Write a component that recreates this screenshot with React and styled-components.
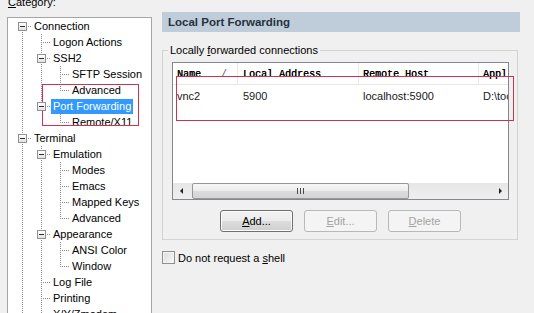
import React from 'react';
import styled, { createGlobalStyle, css } from 'styled-components';

const Global = createGlobalStyle`
  html, body { margin: 0; padding: 0; background: #f0f0f0; overflow: hidden; }
  body { font-family: "Liberation Sans", Arial, sans-serif; font-size: 11px; color: #000; }
`;

const Page = styled.div`
  position: relative;
  width: 534px;
  height: 313px;
  overflow: hidden;
  display: flex;
  align-items: flex-start;
`;

/* ---------- left: category tree ---------- */
const LeftCol = styled.div`
  flex: 0 0 145px;
  margin: -4px 0 0 7px;
`;

const CategoryLabel = styled.div`
  line-height: 13px;
  margin: 0 0 8px 1px;
`;

const TreeBox = styled.div`
  box-sizing: border-box;
  height: 330px;
  border: 1px solid #a5a5a5;
  background: #fff;
  padding-left: 5px;
  overflow: hidden;
`;

const TreeRow = styled.div`
  display: flex;
  align-items: center;
  height: 16px;
  white-space: nowrap;
`;

const Guide = styled.span`
  position: relative;
  flex: 0 0 19px;
  height: 16px;
  &::before {
    content: '';
    position: absolute;
    left: 9px;
    width: 1px;
    top: ${p => (p.$vert === 'bottom' ? '8px' : '0')};
    bottom: ${p => (p.$vert === 'top' ? '7px' : '0')};
    background: repeating-linear-gradient(to bottom, #8e8e8e 0 1px, transparent 1px 2px);
    display: ${p => (p.$vert === 'none' ? 'none' : 'block')};
  }
  &::after {
    content: '';
    position: absolute;
    left: 10px;
    right: 0;
    top: 8px;
    height: 1px;
    background: repeating-linear-gradient(to right, transparent 0 1px, #8e8e8e 1px 2px);
    display: ${p => (p.$branch ? 'block' : 'none')};
  }
`;

const Expander = styled.span`
  position: absolute;
  left: 5px;
  top: 4px;
  width: 9px;
  height: 9px;
  box-sizing: border-box;
  border: 1px solid #919191;
  background: linear-gradient(#ffffff, #e2e2e2);
  z-index: 1;
  &::after {
    content: '';
    position: absolute;
    left: 1px;
    top: 3px;
    width: 5px;
    height: 1px;
    background: #2f2f2f;
  }
`;

const NodeLabel = styled.span`
  padding: 0 2px;
  line-height: 15px;
  height: 15px;
  ${p => p.$selected && css`
    background: #3399ff;
    color: #fff;
  `}
`;

/* ---------- right: port forwarding panel ---------- */
const RightCol = styled.div`
  flex: 0 0 358px;
  margin: 12px 0 0 10px;
`;

const PanelHeader = styled.div`
  height: 20px;
  line-height: 20px;
  padding-left: 6px;
  background: #bfcddb;
  color: #26323e;
  font-weight: bold;
  font-size: 11.5px;
`;

const Group = styled.fieldset`
  box-sizing: border-box;
  width: 356px;
  min-width: 0;
  margin: 11px 0 0;
  padding: 0;
  border: 1px solid #d3d3d3;
`;

const GroupLegend = styled.legend`
  margin-left: 5px;
  padding: 0 2px;
  line-height: 14px;
`;

const GroupBody = styled.div`
  padding: 5px 8px 7px 9px;
`;

const ListView = styled.div`
  box-sizing: border-box;
  height: 138px;
  border: 1px solid #828790;
  background: #fff;
  display: flex;
  flex-direction: column;
  overflow: hidden;
`;

const HeaderRow = styled.div`
  display: flex;
  flex: 0 0 22px;
  box-sizing: border-box;
  border-bottom: 1px solid #e8e8e8;
  font-family: "Liberation Mono", "Courier New", monospace;
  font-size: 10px;
  line-height: 12px;
  color: #000;
  text-shadow: 0.3px 0 0 #000;
`;

const HeaderCell = styled.div`
  box-sizing: border-box;
  flex: 0 0 ${p => p.$w}px;
  padding: 6px 0 0 ${p => p.$pad}px;
  border-right: 1px solid #e8e8e8;
  white-space: nowrap;
  overflow: hidden;
  display: flex;
`;

const SortMark = styled.span`
  margin-left: 20px;
  color: #555;
  text-shadow: none;
`;

const DataRow = styled.div`
  display: flex;
  flex: 0 0 20px;
  box-sizing: border-box;
  padding-top: 2px;
  line-height: 18px;
`;

const DataCell = styled.div`
  box-sizing: border-box;
  flex: 0 0 ${p => p.$w}px;
  padding-left: ${p => p.$pad}px;
  white-space: nowrap;
  overflow: hidden;
  color: #1a1a1a;
`;

const Filler = styled.div`
  flex: 1;
`;

const HScroll = styled.div`
  display: flex;
  flex: 0 0 16px;
  background: linear-gradient(#e6e6e6, #efefef);
`;

const ScrollBtn = styled.div`
  flex: 0 0 17px;
  display: flex;
  align-items: center;
  justify-content: center;
`;

const Arrow = styled.span`
  width: 0;
  height: 0;
  border-top: 3px solid transparent;
  border-bottom: 3px solid transparent;
  ${p => (p.$dir === 'left'
    ? css`border-right: 3px solid #222; margin-left: -1px;`
    : css`border-left: 3px solid #222; margin-left: 1px;`)}
`;

const Track = styled.div`
  flex: 1;
  display: flex;
`;

const Thumb = styled.div`
  box-sizing: border-box;
  flex: 0 0 ${p => p.$w}px;
  margin-left: 2px;
  height: 16px;
  border: 1px solid #979797;
  border-radius: 2px;
  background: linear-gradient(#f6f6f6 0%, #ececec 50%, #dcdcdc 51%, #d4d4d4 100%);
  display: flex;
  align-items: center;
  justify-content: center;
`;

const Grip = styled.span`
  width: 7px;
  height: 6px;
  background: repeating-linear-gradient(to right, #4a4a4a 0 1px, transparent 1px 3px);
`;

const ButtonRow = styled.div`
  display: flex;
  justify-content: center;
  gap: 11px;
  margin-top: 10px;
`;

const Btn = styled.button`
  box-sizing: border-box;
  width: 73px;
  height: 22px;
  padding: 0;
  font-family: "Liberation Sans", Arial, sans-serif;
  font-size: 11px;
  border-radius: 3px;
  ${p => (p.disabled
    ? css`
      border: 1px solid #b5b9bc;
      background: #f4f4f4;
      color: #a3a3a3;
    `
    : css`
      border: 1px solid #707070;
      background: linear-gradient(#f3f3f3 0%, #ebebeb 48%, #dddddd 52%, #cfcfcf 100%);
      color: #000;
      box-shadow: inset 0 0 0 1px #fbfbfb;
    `)}
`;

const CheckRow = styled.label`
  display: flex;
  align-items: center;
  gap: 3px;
  margin-top: 11px;
  height: 13px;
`;

const CheckBox = styled.span`
  box-sizing: border-box;
  width: 13px;
  height: 13px;
  border: 1px solid #8f8f8f;
  background: linear-gradient(135deg, #dcdcdc, #f8f8f8);
  box-shadow: inset 0 0 0 1px #f4f4f4;
`;

/* ---------- annotation overlays ---------- */
const Mark = styled.div`
  position: absolute;
  box-sizing: border-box;
  border: 1px solid #cc3350;
  pointer-events: none;
  left: ${p => p.$x}px;
  top: ${p => p.$y}px;
  width: ${p => p.$w}px;
  height: ${p => p.$h}px;
`;

const TREE = [
  [0, 'Connection'],
  [1, 'Logon Actions'],
  [1, 'SSH2'],
  [2, 'SFTP Session'],
  [2, 'Advanced'],
  [1, 'Port Forwarding', true],
  [2, 'Remote/X11'],
  [0, 'Terminal'],
  [1, 'Emulation'],
  [2, 'Modes'],
  [2, 'Emacs'],
  [2, 'Mapped Keys'],
  [2, 'Advanced'],
  [1, 'Appearance'],
  [2, 'ANSI Color'],
  [2, 'Window'],
  [1, 'Log File'],
  [1, 'Printing'],
  [1, 'X/Y/Zmodem'],
  [0, 'File Transfer'],
  [1, 'FTP/SFTP'],
  [0, 'Advanced'],
];

const hasLater = i => {
  const lvl = TREE[i][0];
  for (let j = i + 1; j < TREE.length; j++) {
    if (TREE[j][0] < lvl) return false;
    if (TREE[j][0] === lvl) return true;
  }
  return false;
};

const COLS = [
  { w: 65, pad: 4 },
  { w: 121, pad: 5 },
  { w: 120, pad: 4 },
  { w: 100, pad: 4 },
];

function Tree() {
  return (
    <TreeBox>
      {TREE.map(([level, label, selected], i) => {
        const guides = [];
        for (let k = 0; k < level; k++) {
          let a = i - 1;
          while (TREE[a][0] !== k) a--;
          guides.push(hasLater(a) ? 'full' : 'none');
        }
        const later = hasLater(i);
        const vert = i === 0 ? (later ? 'bottom' : 'none') : later ? 'full' : 'top';
        const expandable = i + 1 < TREE.length && TREE[i + 1][0] > level;
        return (
          <TreeRow key={i}>
            {guides.map((g, k) => (
              <Guide key={k} $vert={g} />
            ))}
            <Guide $vert={vert} $branch>
              {expandable && <Expander />}
            </Guide>
            <NodeLabel $selected={selected}>{label}</NodeLabel>
          </TreeRow>
        );
      })}
    </TreeBox>
  );
}

export default function App() {
  return (
    <Page>
      <Global />
      <LeftCol>
        <CategoryLabel>
          <u>C</u>ategory:
        </CategoryLabel>
        <Tree />
      </LeftCol>

      <RightCol>
        <PanelHeader>Local Port Forwarding</PanelHeader>
        <Group>
          <GroupLegend>
            Locally <u>f</u>orwarded connections
          </GroupLegend>
          <GroupBody>
            <ListView>
              <HeaderRow>
                <HeaderCell $w={COLS[0].w} $pad={COLS[0].pad}>
                  Name<SortMark>/</SortMark>
                </HeaderCell>
                <HeaderCell $w={COLS[1].w} $pad={COLS[1].pad}>Local Address</HeaderCell>
                <HeaderCell $w={COLS[2].w} $pad={COLS[2].pad}>Remote Host</HeaderCell>
                <HeaderCell $w={COLS[3].w} $pad={COLS[3].pad}>Application</HeaderCell>
              </HeaderRow>
              <DataRow>
                <DataCell $w={COLS[0].w} $pad={COLS[0].pad}>vnc2</DataCell>
                <DataCell $w={COLS[1].w} $pad={COLS[1].pad}>5900</DataCell>
                <DataCell $w={COLS[2].w} $pad={COLS[2].pad}>localhost:5900</DataCell>
                <DataCell $w={COLS[3].w} $pad={COLS[3].pad}>D:\tools\vnc</DataCell>
              </DataRow>
              <Filler />
              <HScroll>
                <ScrollBtn>
                  <Arrow $dir="left" />
                </ScrollBtn>
                <Track>
                  <Thumb $w={217}>
                    <Grip />
                  </Thumb>
                </Track>
                <ScrollBtn>
                  <Arrow $dir="right" />
                </ScrollBtn>
              </HScroll>
            </ListView>
            <ButtonRow>
              <Btn>
                <u>A</u>dd...
              </Btn>
              <Btn disabled>
                <u>E</u>dit...
              </Btn>
              <Btn disabled>
                <u>D</u>elete
              </Btn>
            </ButtonRow>
          </GroupBody>
        </Group>
        <CheckRow>
          <CheckBox />
          <span>
            Do not request a <u>s</u>hell
          </span>
        </CheckRow>
      </RightCol>

      <Mark $x={42} $y={84} $w={97} $h={42} />
      <Mark $x={176} $y={76} $w={338} $h={45} />
    </Page>
  );
}
